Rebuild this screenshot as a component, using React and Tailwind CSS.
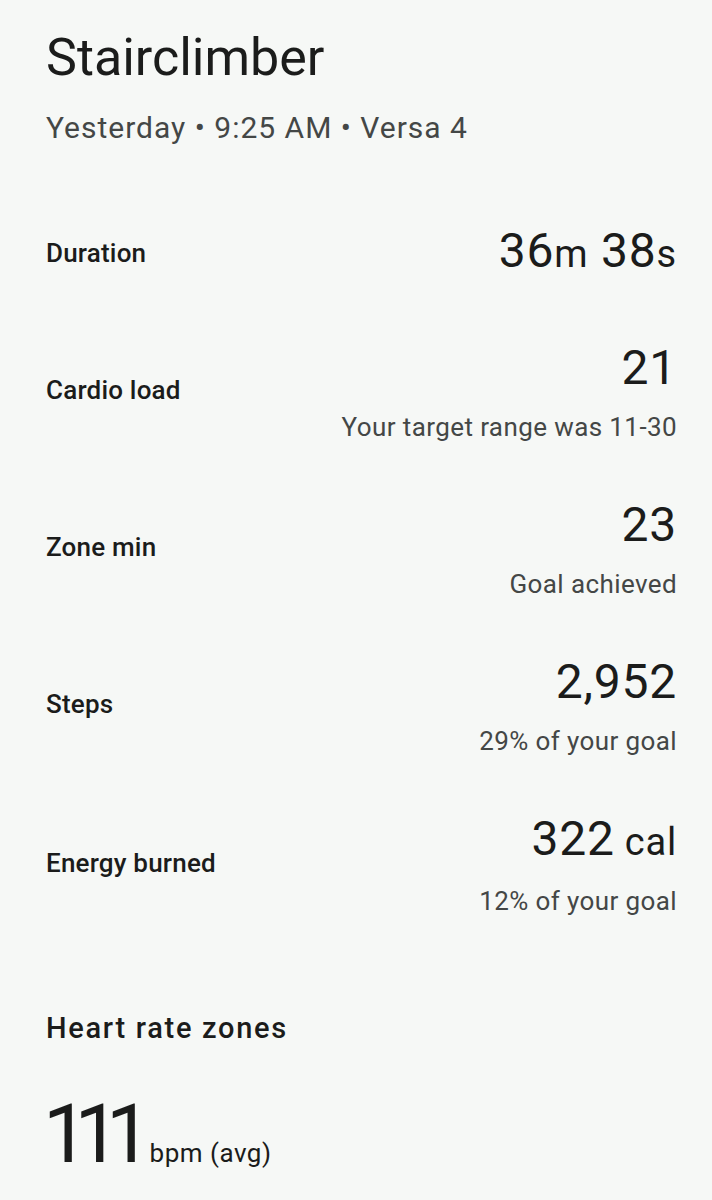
import React from "react";

const stats = [
  { label: "Cardio load", value: "21", sub: "Your target range was 11-30" },
  { label: "Zone min", value: "23", sub: "Goal achieved" },
  { label: "Steps", value: "2,952", sub: "29% of your goal" },
  { label: "Energy burned", value: "322", unit: "cal", sub: "12% of your goal" },
];

function StatRow({ label, value, unit, sub }) {
  return (
    <div className="flex items-center justify-between">
      <div className="text-[26px] leading-[34px] font-medium text-[#1b1c1b] tracking-[0.2px] translate-y-[-2px]">{label}</div>
      <div className="text-right">
        <div className="text-[48px] leading-[56px] text-[#1b1c1b] tracking-[0.8px]">
          {value}
          {unit && <span className="text-[38px] ml-[10px]">{unit}</span>}
        </div>
        <div className="mt-[14px] text-[26px] leading-[34px] text-[#444746] tracking-[0.4px]">{sub}</div>
      </div>
    </div>
  );
}

export default function App() {
  return (
    <div
      className="min-h-[1200px] bg-[#f6f8f6] pl-[46px] pr-[35px] pt-[27px] overflow-hidden"
      style={{ fontFamily: "Roboto, 'Noto Sans', sans-serif" }}
    >
      <h1 className="text-[52px] leading-[61px] text-[#1b1c1b]">Stairclimber</h1>
      <p className="mt-[22px] text-[30px] leading-[35px] text-[#444746] tracking-[1px]">
        Yesterday • 9:25 AM • Versa 4
      </p>

      <div className="mt-[78px] flex items-center justify-between">
        <div className="text-[26px] leading-[34px] font-medium text-[#1b1c1b] tracking-[0.2px]">Duration</div>
        <div className="text-[48px] leading-[56px] text-[#1b1c1b] tracking-[0.8px]">
          36<span className="text-[38px]">m</span> 38<span className="text-[38px]">s</span>
        </div>
      </div>

      <div className="mt-[58px] flex flex-col gap-[53px]">
        {stats.map((s) => (
          <StatRow key={s.label} {...s} />
        ))}
      </div>

      <h2 className="mt-[93px] text-[29px] leading-[34px] font-medium text-[#1b1c1b] tracking-[1.7px]">
        Heart rate zones
      </h2>
      <div className="mt-[45px] -ml-[3px] flex items-baseline">
        <span className="text-[81px] leading-[90px] text-[#1b1c1b] tracking-[-14px]">111</span>
        <span className="ml-[12px] text-[26px] text-[#1b1c1b] tracking-[0.5px]">bpm (avg)</span>
      </div>
    </div>
  );
}
